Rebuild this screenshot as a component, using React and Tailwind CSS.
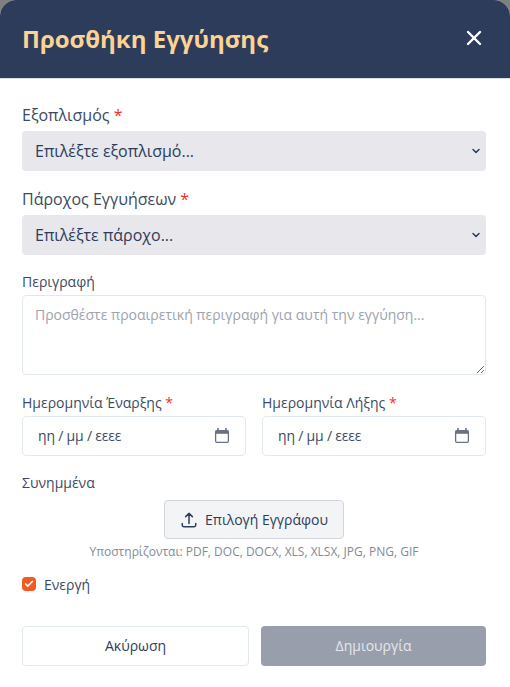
import React from 'react';
import { X, ChevronDown, Check } from 'lucide-react';

const CalendarIcon = () => (
  <svg className="w-4 h-4 text-gray-500" viewBox="0 0 16 16" fill="none">
    <path d="M4 0v3M12 0v3" stroke="currentColor" strokeWidth="1.6" />
    <rect x="1.6" y="2.6" width="12.8" height="11.8" rx="1.4" stroke="currentColor" strokeWidth="1.3" />
    <rect x="1.6" y="2.6" width="12.8" height="3.2" fill="currentColor" />
  </svg>
);

const UploadIcon = () => (
  <svg className="w-[18px] h-[18px]" viewBox="0 0 24 24" fill="none" stroke="currentColor" strokeWidth="2" strokeLinecap="round" strokeLinejoin="round">
    <path d="M3 16.5v2.25A2.25 2.25 0 0 0 5.25 21h13.5A2.25 2.25 0 0 0 21 18.75V16.5m-13.5-9L12 3m0 0 4.5 4.5M12 3v13.5" />
  </svg>
);

const Label = ({ children, required, big, tight }) => (
  <label className={`block text-[#3b4a63] ${big ? 'text-base leading-6 mb-1' : tight ? 'text-sm leading-5 mb-[3px]' : 'text-sm leading-5 mb-1'}`}>
    {children}
    {required && <span className="text-red-500"> *</span>}
  </label>
);

const SelectBox = ({ text }) => (
  <div className="h-10 pl-[13px] pr-[4.5px] flex items-center justify-between bg-[#e7e7ec] rounded text-[#2d3c5a] text-base">
    <span>{text}</span>
    <ChevronDown className="w-3 h-3" strokeWidth={3} />
  </div>
);

const DateBox = () => (
  <div className="h-10 pl-[15px] pr-[15px] flex items-center justify-between bg-white border border-[#e2e8f0] rounded text-sm text-[#3b4a63]">
    <span className="tracking-[-0.2px]">ηη / μμ / εεεε</span>
    <CalendarIcon />
  </div>
);

const App = () => {
  return (
    <div className="w-[510px] h-[687px] bg-[#808080] overflow-hidden font-['Open_Sans',sans-serif]">
      <div className="h-full bg-white rounded-t-2xl overflow-hidden">
        {/* Header */}
        <div className="h-[79px] pl-[22px] pr-6 flex items-center justify-between bg-[#2d3c5a] border-b border-[#d9dde3]">
          <h2 className="text-2xl font-bold text-[#fcd392]">Προσθήκη Εγγύησης</h2>
          <X className="w-6 h-6 -mt-[3px] text-white" strokeWidth={2.4} />
        </div>

        {/* Form */}
        <div className="pl-[22px] pr-6 pt-6">
          <Label big required>Εξοπλισμός</Label>
          <SelectBox text="Επιλέξτε εξοπλισμό..." />

          <div className="mt-4">
            <Label big required>Πάροχος Εγγυήσεων</Label>
            <SelectBox text="Επιλέξτε πάροχο..." />
          </div>

          <div className="mt-[17px]">
            <Label tight>Περιγραφή</Label>
            <textarea
              readOnly
              placeholder="Προσθέστε προαιρετική περιγραφή για αυτή την εγγύηση..."
              className="block w-full h-20 px-3 py-[9px] border border-[#e2e8f0] rounded text-sm placeholder:text-[#9ca3af] outline-none"
            />
          </div>

          <div className="mt-[18px] grid grid-cols-2 gap-4">
            <div>
              <Label required tight>Ημερομηνία Έναρξης</Label>
              <DateBox />
            </div>
            <div>
              <Label required tight>Ημερομηνία Λήξης</Label>
              <DateBox />
            </div>
          </div>

          <div className="mt-[17px]">
            <Label>Συνημμένα</Label>
            <div className="mt-[7px] flex flex-col items-center">
              <button className="h-[39px] w-[180px] flex items-center justify-center gap-[7px] bg-[#f3f4f6] border border-[#d1d5db] rounded text-sm text-[#2d3c5a]">
                <UploadIcon />
                Επιλογή Εγγράφου
              </button>
              <p className="mt-[3px] text-xs leading-5 text-[#838a98]">
                Υποστηρίζονται: PDF, DOC, DOCX, XLS, XLSX, JPG, PNG, GIF
              </p>
            </div>
          </div>

          <div className="mt-[13px] flex items-center gap-2">
            <div className="w-3.5 h-3.5 -mt-[2px] rounded-sm bg-[#f15a24] flex items-center justify-center">
              <Check className="w-2.5 h-2.5 text-white" strokeWidth={4} />
            </div>
            <span className="text-sm leading-5 text-[#3b4a63]">Ενεργή</span>
          </div>

          <div className="mt-[31px] flex gap-3">
            <button className="w-[227px] h-10 bg-white border border-[#e2e8f0] rounded text-sm text-[#2d3c5a]">Ακύρωση</button>
            <button className="w-[225px] h-10 bg-[#989eac] rounded text-sm text-[#e5e7eb]">Δημιουργία</button>
          </div>
        </div>
      </div>
    </div>
  );
};

export default App;
